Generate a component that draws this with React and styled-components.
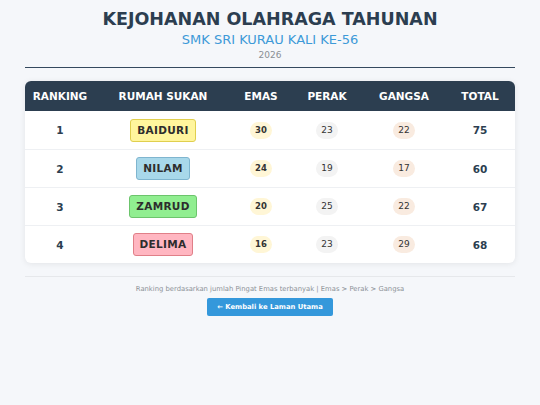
import React from 'react';
import styled, { createGlobalStyle } from 'styled-components';

const GlobalStyle = createGlobalStyle`
  html, body {
    margin: 0;
    padding: 0;
    background: #f5f7fa;
    font-family: "DejaVu Sans", Verdana, sans-serif;
  }
`;

const Page = styled.div`
  width: 540px;
  min-height: 405px;
  padding: 8px 25px 0;
  box-sizing: border-box;
`;

const Header = styled.header`
  text-align: center;
  padding-bottom: 5px;
  border-bottom: 1.5px solid #34495e;
`;

const Title = styled.h1`
  margin: 0;
  font-size: 17.5px;
  font-weight: 700;
  color: #2c3e50;
  line-height: 22px;
`;

const Subtitle = styled.div`
  margin-top: 1px;
  font-size: 13px;
  color: #3d9ad8;
  line-height: 17px;
`;

const Year = styled.div`
  margin-top: 1px;
  font-size: 9px;
  color: #8a8f94;
  line-height: 13px;
`;

const Card = styled.div`
  margin-top: 13px;
  background: #fff;
  border-radius: 6px;
  overflow: hidden;
  box-shadow: 0 1px 6px rgba(0, 0, 0, 0.08);
`;

const cols = '70px 136px 60px 72px 82px 70px';

const HeadRow = styled.div`
  display: grid;
  grid-template-columns: ${cols};
  height: 30px;
  background: #2c3e50;
  align-items: center;
`;

const HeadCell = styled.div`
  text-align: center;
  color: #fff;
  font-size: 10.5px;
  font-weight: 700;
`;

const Row = styled.div`
  display: grid;
  grid-template-columns: ${cols};
  height: 38px;
  box-sizing: border-box;
  align-items: center;
  border-top: ${(p) => (p.first ? 'none' : '1px solid #eef0f3')};
`;

const Cell = styled.div`
  display: flex;
  justify-content: center;
  align-items: center;
  color: #2c3e50;
  font-size: 10.5px;
  font-weight: ${(p) => (p.bold ? 700 : 400)};
`;

const House = styled.span`
  display: inline-block;
  padding: 0 6px;
  height: 21px;
  line-height: 21px;
  border-radius: 3px;
  font-size: 10.5px;
  font-weight: 700;
  color: #2d2d2d;
  letter-spacing: 0.3px;
  background: ${(p) => p.bg};
  border: 1px solid ${(p) => p.bd};
`;

const Medal = styled.span`
  display: inline-block;
  min-width: 22px;
  height: 17px;
  line-height: 17px;
  border-radius: 9px;
  text-align: center;
  font-size: ${(p) => (p.gold ? '8.5px' : '9px')};
  font-weight: ${(p) => (p.gold ? 700 : 400)};
  color: #333;
  background: ${(p) => p.bg};
`;

const Footer = styled.footer`
  margin-top: 13px;
  border-top: 1px solid #e6e8eb;
  text-align: center;
  padding-top: 8px;
`;

const Note = styled.div`
  font-size: 6.8px;
  color: #8c9197;
  line-height: 9px;
`;

const BackButton = styled.button`
  margin-top: 0;
  border: none;
  background: #3498db;
  color: #fff;
  font-family: "DejaVu Sans", Verdana, sans-serif;
  font-size: 6.8px;
  font-weight: 700;
  white-space: nowrap;
  width: 126px;
  height: 18px;
  padding: 0;
  border-radius: 2px;
  cursor: pointer;
`;

const houses = {
  BAIDURI: { bg: '#fff59d', bd: '#e0cf4f' },
  NILAM: { bg: '#a8d8ea', bd: '#7fb5cf' },
  ZAMRUD: { bg: '#90ee90', bd: '#6cc46c' },
  DELIMA: { bg: '#ffb6c1', bd: '#e07f88' },
};

const rows = [
  { rank: 1, name: 'BAIDURI', emas: 30, perak: 23, gangsa: 22, total: 75 },
  { rank: 2, name: 'NILAM', emas: 24, perak: 19, gangsa: 17, total: 60 },
  { rank: 3, name: 'ZAMRUD', emas: 20, perak: 25, gangsa: 22, total: 67 },
  { rank: 4, name: 'DELIMA', emas: 16, perak: 23, gangsa: 29, total: 68 },
];

export default function App() {
  return (
    <>
      <GlobalStyle />
      <Page>
        <Header>
          <Title>KEJOHANAN OLAHRAGA TAHUNAN</Title>
          <Subtitle>SMK SRI KURAU KALI KE-56</Subtitle>
          <Year>2026</Year>
        </Header>

        <Card>
          <HeadRow>
            <HeadCell>RANKING</HeadCell>
            <HeadCell>RUMAH SUKAN</HeadCell>
            <HeadCell>EMAS</HeadCell>
            <HeadCell>PERAK</HeadCell>
            <HeadCell>GANGSA</HeadCell>
            <HeadCell>TOTAL</HeadCell>
          </HeadRow>
          {rows.map((r, i) => (
            <Row key={r.name} first={i === 0}>
              <Cell bold>{r.rank}</Cell>
              <Cell>
                <House bg={houses[r.name].bg} bd={houses[r.name].bd}>{r.name}</House>
              </Cell>
              <Cell>
                <Medal gold bg="#fff6d6">{r.emas}</Medal>
              </Cell>
              <Cell>
                <Medal bg="#f3f3f3">{r.perak}</Medal>
              </Cell>
              <Cell>
                <Medal bg="#f9ebe0">{r.gangsa}</Medal>
              </Cell>
              <Cell bold>{r.total}</Cell>
            </Row>
          ))}
        </Card>

        <Footer>
          <Note>Ranking berdasarkan jumlah Pingat Emas terbanyak | Emas &gt; Perak &gt; Gangsa</Note>
          <BackButton>← Kembali ke Laman Utama</BackButton>
        </Footer>
      </Page>
    </>
  );
}
